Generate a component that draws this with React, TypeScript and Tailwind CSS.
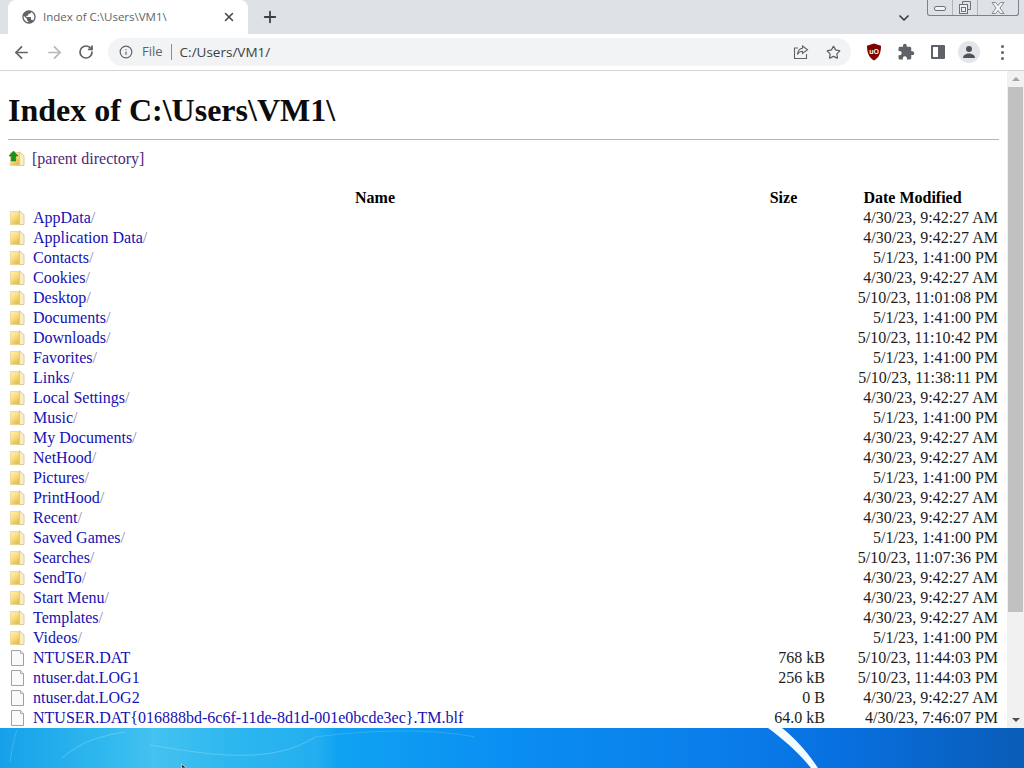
import { ArrowLeft, ArrowRight, RotateCw, Info, Star, Plus, X, ChevronDown } from "lucide-react";

const folders: [string, string][] = [
  ["AppData", "4/30/23, 9:42:27 AM"],
  ["Application Data", "4/30/23, 9:42:27 AM"],
  ["Contacts", "5/1/23, 1:41:00 PM"],
  ["Cookies", "4/30/23, 9:42:27 AM"],
  ["Desktop", "5/10/23, 11:01:08 PM"],
  ["Documents", "5/1/23, 1:41:00 PM"],
  ["Downloads", "5/10/23, 11:10:42 PM"],
  ["Favorites", "5/1/23, 1:41:00 PM"],
  ["Links", "5/10/23, 11:38:11 PM"],
  ["Local Settings", "4/30/23, 9:42:27 AM"],
  ["Music", "5/1/23, 1:41:00 PM"],
  ["My Documents", "4/30/23, 9:42:27 AM"],
  ["NetHood", "4/30/23, 9:42:27 AM"],
  ["Pictures", "5/1/23, 1:41:00 PM"],
  ["PrintHood", "4/30/23, 9:42:27 AM"],
  ["Recent", "4/30/23, 9:42:27 AM"],
  ["Saved Games", "5/1/23, 1:41:00 PM"],
  ["Searches", "5/10/23, 11:07:36 PM"],
  ["SendTo", "4/30/23, 9:42:27 AM"],
  ["Start Menu", "4/30/23, 9:42:27 AM"],
  ["Templates", "4/30/23, 9:42:27 AM"],
  ["Videos", "5/1/23, 1:41:00 PM"],
];

const files: [string, string, string][] = [
  ["NTUSER.DAT", "768 kB", "5/10/23, 11:44:03 PM"],
  ["ntuser.dat.LOG1", "256 kB", "5/10/23, 11:44:03 PM"],
  ["ntuser.dat.LOG2", "0 B", "4/30/23, 9:42:27 AM"],
  ["NTUSER.DAT{016888bd-6c6f-11de-8d1d-001e0bcde3ec}.TM.blf", "64.0 kB", "4/30/23, 7:46:07 PM"],
];

function FolderIcon({ up }: { up?: boolean }) {
  const id = up ? "fold-up" : "fold";
  return (
    <svg width="16" height="16" viewBox="0 0 16 16" className="shrink-0">
      <defs>
        <linearGradient id={id} x1="0" x2="0.6" y1="0" y2="1">
          <stop offset="0" stopColor="#fff3b8" />
          <stop offset="0.55" stopColor="#f8dc80" />
          <stop offset="1" stopColor="#e6bd50" />
        </linearGradient>
      </defs>
      <g transform={up ? "translate(1 0)" : undefined}>
        <path d="M0.500 1.500h9v13h-9z" fill={`url(#${id})`} stroke="#e8cf86" strokeWidth="0.7" />
        <path d="M9.500 0.800l4.500 4v9.700h-4.500z" fill="#f9eec8" stroke="#d8c182" strokeWidth="0.8" />
      </g>
      {up && <path d="M4.500 0l4.500 5H6.700v5H2.300V5H0z" fill="#18951f" stroke="#0b6a14" strokeWidth="0.5" />}
    </svg>
  );
}

function FileIcon() {
  return (
    <svg width="16" height="16" viewBox="0 0 16 16" className="shrink-0">
      <path d="M1.500 0.500h9l3 3v12h-12z" fill="#fafafa" stroke="#a0a0a0" />
      <path d="M10.500 0.500v3h3" fill="#ececec" stroke="#b0b0b0" />
    </svg>
  );
}

function Row({ icon, name, slash, size, date }: { icon: React.ReactNode; name: string; slash?: boolean; size?: string; date: string }) {
  return (
    <tr className="h-5">
      <td className="p-0">
        <div className="flex items-center pl-[2px]">
          {icon}
          <a className="ml-[7px] whitespace-nowrap text-[#1410b4]">{name}{slash && <span className="text-[#8a8ab8]">/</span>}</a>
        </div>
      </td>
      <td className="p-0 pr-8 text-right whitespace-nowrap text-[#1c1c1c]">{size}</td>
      <td className="p-0 text-right whitespace-nowrap text-[#1c1c1c]">{date}</td>
    </tr>
  );
}

export default function App() {
  return (
    <div className="relative flex h-screen w-full flex-col overflow-hidden bg-white font-['Liberation_Sans',sans-serif]">
      {/* tab strip */}
      <div className="flex h-[34px] shrink-0 items-end bg-[#dee1e6] pl-2">
        <div className="flex h-[34px] w-[240px] items-center rounded-t-lg bg-white pl-[13px] pr-[12px]">
          <svg width="16" height="16" viewBox="0 0 24 24" fill="#5f6368" className="shrink-0">
            <path d="M12 2C6.48 2 2 6.48 2 12s4.48 10 10 10 10-4.48 10-10S17.52 2 12 2zm-1 17.93c-3.95-.49-7-3.85-7-7.93 0-.62.08-1.21.21-1.79L9 15v1c0 1.1.9 2 2 2v1.93zm6.9-2.54c-.26-.81-1-1.39-1.9-1.39h-1v-3c0-.55-.45-1-1-1H8v-2h2c.55 0 1-.45 1-1V7h2c1.1 0 2-.9 2-2v-.41c2.93 1.19 5 4.06 5 7.41 0 2.08-.8 3.97-2.1 5.39z" />
          </svg>
          <span className="ml-[6px] flex-1 truncate font-['Open_Sans',sans-serif] text-[11.5px] text-[#5f6368]">Index of C:\Users\VM1\</span>
          <X size={14} strokeWidth={2.6} className="text-[#45484d]" />
        </div>
        <div className="flex h-[34px] w-[44px] items-center justify-center">
          <Plus size={18} strokeWidth={2.4} className="text-[#3c4043]" />
        </div>
        <div className="flex-1" />
        <div className="mr-[112px] flex h-[34px] items-center pt-[1px]">
          <ChevronDown size={16} strokeWidth={2.6} className="text-[#3c4043]" />
        </div>
      </div>

      {/* window buttons */}
      <div className="absolute right-[5px] top-0 flex h-[16px] w-[92px] rounded-b-[3px] border border-t-0 border-[#7b8289]">
        <div className="flex w-[25px] items-center justify-center border-r border-[#b0b4b9]">
          <div className="mt-[2px] h-[5px] w-[12px] rounded-[2px] border border-[#6d7278] bg-[#f3f4f6]" />
        </div>
        <div className="flex w-[25px] items-center justify-center border-r border-[#b0b4b9]">
          <svg width="14" height="13" viewBox="0 0 14 13" fill="none" stroke="#6d7278">
            <path d="M4.500 3V0.500h8v8h-3" />
            <rect x="1.500" y="3.500" width="8" height="9" fill="#eef0f2" />
            <rect x="3.500" y="6.500" width="4" height="4" />
          </svg>
        </div>
        <div className="flex flex-1 items-center justify-center">
          <svg width="14" height="12" viewBox="0 0 14 12" fill="#f3f4f6" stroke="#7b8289" strokeWidth="0.9">
            <path d="M1 0.500h3.500L7 3.500l2.500-3H13L9 6l4 5.500H9.500L7 8.500l-2.500 3H1L5 6z" />
          </svg>
        </div>
      </div>

      {/* toolbar */}
      <div className="flex h-[37px] shrink-0 items-center border-b border-[#d3d5d8] bg-white">
        <ArrowLeft size={19} strokeWidth={2.2} className="ml-[12px] text-[#5f6368]" />
        <ArrowRight size={19} strokeWidth={2.2} className="ml-[14px] text-[#b4b7bb]" />
        <RotateCw size={16} strokeWidth={2.6} className="ml-[14px] text-[#5f6368]" />
        <div className="ml-[14px] flex h-[28px] w-[743px] items-center rounded-full bg-[#f1f3f4] pl-[11px] pr-[10px]">
          <Info size={14} strokeWidth={2} className="text-[#5f6368]" />
          <span className="ml-[9px] font-['Open_Sans',sans-serif] text-[13px] text-[#5f6368]">File</span>
          <span className="ml-2 h-4 w-px bg-[#8a8d91]" />
          <span className="ml-[8px] flex-1 font-['Open_Sans',sans-serif] text-[13.5px] text-[#3c4043]">C:/Users/VM1/</span>
          <svg width="16" height="16" viewBox="0 0 16 16" fill="none" stroke="#5f6368" strokeWidth="1.1">
            <path d="M5 4H1.500v10.500h12V10" />
            <path d="M9.500 2l5 3.700-5 3.700V7.200C7 7.200 5.500 8.500 4.500 10.500 4.800 7 6.600 4.600 9.500 4.300z" />
          </svg>
          <Star size={15} strokeWidth={2} className="ml-[17px] text-[#5f6368]" />
        </div>
        <svg width="16" height="18" viewBox="0 0 16 18" className="ml-[15px] shrink-0">
          <path d="M8 0.500l7 2.200c0 6.500-1.500 11.500-7 14.800C2.500 14.200 1 9.200 1 2.700z" fill="#800000" />
          <text x="8" y="11" textAnchor="middle" fontSize="7" fontWeight="700" fill="#fff" fontFamily="Liberation Sans, sans-serif">uO</text>
        </svg>
        <svg width="18" height="18" viewBox="0 0 24 24" fill="#5f6368" className="ml-[15px] shrink-0">
          <path d="M20.500 11H19V7c0-1.100-.9-2-2-2h-4V3.500C13 2.120 11.880 1 10.500 1S8 2.120 8 3.500V5H4c-1.100 0-1.990.9-1.990 2v3.800H3.500c1.490 0 2.700 1.210 2.700 2.700s-1.210 2.700-2.700 2.700H2V20c0 1.100.9 2 2 2h3.800v-1.500c0-1.490 1.210-2.700 2.700-2.700 1.490 0 2.700 1.210 2.700 2.700V22H17c1.100 0 2-.9 2-2v-4h1.500c1.380 0 2.500-1.120 2.500-2.500S21.880 11 20.500 11z" />
        </svg>
        <div className="ml-[16px] flex h-[14px] w-[14px] shrink-0 justify-end rounded-[1px] border-2 border-[#5f6368]">
          <div className="h-full w-[5px] bg-[#5f6368]" />
        </div>
        <div className="ml-[13px] flex h-[22px] w-[22px] shrink-0 items-center justify-center rounded-full bg-[#e2e5e9]">
          <svg width="16" height="16" viewBox="0 0 16 16" fill="#4f5358">
            <circle cx="8" cy="5" r="3" />
            <path d="M2 14c0-3 3-4.500 6-4.500s6 1.500 6 4.500z" />
          </svg>
        </div>
        <div className="ml-[21px] flex flex-col gap-[3px]">
          <span className="h-[3px] w-[3px] rounded-full bg-[#5f6368]" />
          <span className="h-[3px] w-[3px] rounded-full bg-[#5f6368]" />
          <span className="h-[3px] w-[3px] rounded-full bg-[#5f6368]" />
        </div>
      </div>

      {/* page */}
      <div className="flex min-h-0 flex-1 font-['Liberation_Serif',serif] text-base leading-5 text-black">
        <div className="min-w-0 flex-1 overflow-hidden px-2">
          <h1 className="mt-[21px] mb-[10px] text-[32px] leading-[37px] font-bold text-[#0c0c0c]">Index of C:\Users\VM1\</h1>
          <hr className="border-[#b5b5b5]" />
          <div className="mt-[9px] flex h-5 items-center pl-[1px] text-[#4b2a7a]">
            <FolderIcon up />
            <span className="ml-[7px]">[parent directory]</span>
          </div>
          <table className="mt-[19px] w-[990px] table-fixed border-collapse">
            <colgroup>
              <col className="w-[734px]" />
              <col className="w-[115px]" />
              <col className="w-[141px]" />
            </colgroup>
            <thead>
              <tr className="h-5">
                <th className="p-0 font-bold">Name</th>
                <th className="p-0 pr-8 font-bold">Size</th>
                <th className="p-0 pr-[30px] font-bold whitespace-nowrap">Date Modified</th>
              </tr>
            </thead>
            <tbody>
              {folders.map(([name, date]) => (
                <Row key={name} icon={<FolderIcon />} name={name} slash date={date} />
              ))}
              {files.map(([name, size, date]) => (
                <Row key={name} icon={<FileIcon />} name={name} size={size} date={date} />
              ))}
            </tbody>
          </table>
        </div>
        {/* scrollbar */}
        <div className="flex w-[17px] shrink-0 flex-col items-center bg-[#f1f1f1]">
          <div className="flex h-[16px] items-center justify-center">
            <div className="h-0 w-0 border-x-[4px] border-b-[4px] border-x-transparent border-b-[#a3a3a3]" />
          </div>
          <div className="h-[525px] w-[15px] bg-[#c1c1c1]" />
          <div className="flex-1" />
          <div className="flex h-[16px] items-center justify-center">
            <div className="h-0 w-0 border-x-[4px] border-t-[4px] border-x-transparent border-t-[#505050]" />
          </div>
        </div>
      </div>

      {/* desktop behind the window */}
      <svg width="1024" height="40" viewBox="0 0 1024 40" className="block shrink-0">
        <defs>
          <linearGradient id="wall" x1="0" x2="1" y1="0" y2="0">
            <stop offset="0" stopColor="#16a0ea" />
            <stop offset="0.1" stopColor="#2fb8ee" />
            <stop offset="0.15" stopColor="#44c2f0" />
            <stop offset="0.22" stopColor="#2fb8ef" />
            <stop offset="0.31" stopColor="#22aef0" />
            <stop offset="0.33" stopColor="#10a2f2" />
            <stop offset="0.5" stopColor="#0a8ef2" />
            <stop offset="0.7" stopColor="#0a7eea" />
            <stop offset="0.82" stopColor="#0870e0" />
            <stop offset="1" stopColor="#0a5cb8" />
          </linearGradient>
        </defs>
        <rect width="1024" height="40" fill="url(#wall)" />
        <g fill="none" stroke="#8fdcf7" strokeOpacity="0.45">
          <path d="M62 30C80 14 100 8 125 4" />
          <path d="M150 17c50 8 120 22 165-8" />
          <path d="M315 9c60-8 120-8 160 0" strokeOpacity="0.25" />
          <path d="M10 34C12 20 14 10 17 2" strokeOpacity="0.3" />
        </g>
        <path d="M768 0h14c14 11 26 25 36 40h-7C798 24 784 12 768 0z" fill="#f4fbff" />
        <path d="M181.500 36l0 4h5z" fill="#1a1a1a" stroke="#fff" strokeWidth="0.6" />
      </svg>
    </div>
  );
}
